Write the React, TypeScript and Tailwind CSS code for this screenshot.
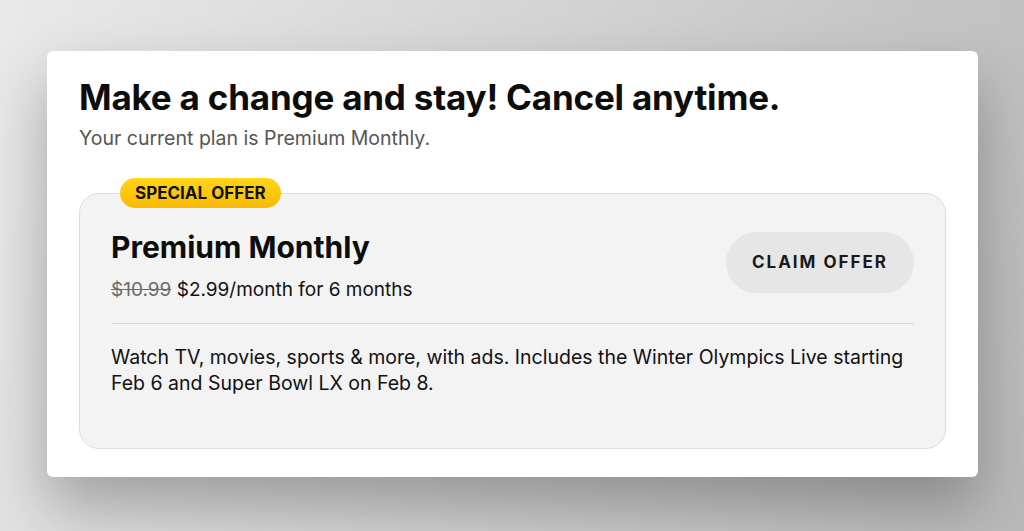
import React from 'react';

export default function App() {
  return (
    <div className="h-[531px] w-[1024px] overflow-hidden bg-[linear-gradient(110deg,#e9e9e9_0%,#d4d4d4_45%,#b9b9b9_100%)] pt-[51px] pl-[47px] font-['Inter',sans-serif]">
      <div className="w-[931px] h-[426px] rounded-[6px] bg-white px-[32px] pt-[25px] shadow-[0_30px_60px_rgba(0,0,0,0.28)]">
        <h1 className="text-[35px] leading-[42px] font-bold tracking-[-0.2px] text-[#0d0d0d]">Make a change and stay! Cancel anytime.</h1>
        <p className="mt-[7px] text-[19.5px] leading-[26px] text-[#555555]">Your current plan is Premium Monthly.</p>

        <div className="relative mt-[42px] rounded-[20px] border border-[#dedede] bg-[#f3f3f3] px-[31px] pt-[35px] pb-[52px]">
          <span className="absolute left-[40px] top-[-16px] rounded-full bg-[linear-gradient(180deg,#ffd61a_0%,#f7b900_100%)] px-[15px] py-[4px] text-[17px] leading-[22px] font-bold text-[#111111]">
            SPECIAL OFFER
          </span>
          <div className="flex items-start justify-between">
            <div>
              <h2 className="text-[30px] leading-[36px] font-bold text-[#0d0d0d]">Premium Monthly</h2>
              <p className="mt-[12px] text-[19px] leading-[26px] text-[#111111]">
                <span className="text-[#6b6b6b] line-through">$10.99</span> $2.99/month for 6 months
              </p>
            </div>
            <button className="mt-[3px] h-[61px] w-[188px] rounded-full bg-[#e6e6e6] text-[17px] font-bold tracking-[2px] text-[#1a1a1a]">
              CLAIM OFFER
            </button>
          </div>
          <div className="mt-[20px] h-px bg-[#d9d9d9]" />
          <p className="mt-[20px] text-[19.5px] leading-[26px] text-[#111111]">
            Watch TV, movies, sports &amp; more, with ads. Includes the Winter Olympics Live starting Feb 6 and Super Bowl LX on Feb 8.
          </p>
        </div>
      </div>
    </div>
  );
}
